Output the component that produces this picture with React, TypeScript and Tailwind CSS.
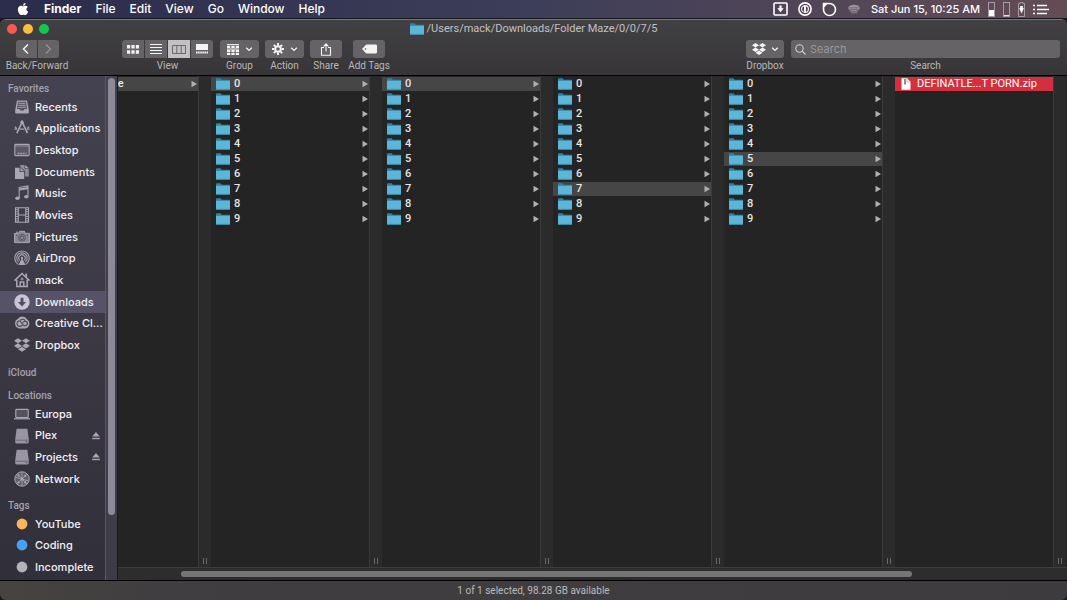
import type { ReactNode } from 'react';
import { FaApple, FaDropbox } from 'react-icons/fa';

function Icon({ children, className = 'size-4', box = '0 0 16 16' }: { children: ReactNode; className?: string; box?: string }) {
  return (
    <svg viewBox={box} className={className + ' shrink-0'} fill="none" stroke="currentColor" strokeWidth="1" aria-hidden="true">
      {children}
    </svg>
  );
}

function FolderIcon() {
  return (
    <svg viewBox="0 0 14 12" className="h-3 w-[14px] shrink-0" aria-hidden="true">
      <path d="M0 .8Q0 .3.5.3H4.6L5.8 1.7H13.5Q14 1.7 14 2.2V5H0Z" fill="#32819f" />
      <path d="M0 2.7H14V11Q14 11.6 13.4 11.6H.6Q0 11.6 0 11Z" fill="#5cb6d9" />
      <path d="M0 10.8H14V11Q14 11.6 13.4 11.6H.6Q0 11.6 0 11Z" fill="#489fbe" />
    </svg>
  );
}

function Chevron() {
  return (
    <Icon className="h-2 w-2" box="0 0 8 8">
      <path d="M1.2 2.7 4 5.4 6.8 2.7" strokeWidth="1.3" />
    </Icon>
  );
}

const sideIcons: Record<string, ReactNode> = {
  Recents: (
    <Icon>
      <path d="M3 1.5H13L14.8 11V13.5Q14.8 14.6 13.7 14.6H2.3Q1.2 14.6 1.2 13.5V11Z" fill="#aaa6b4" stroke="none" />
      <path d="M4 2.8H12L13 10H10.5L9.8 11.5H6.2L5.5 10H3Z" fill="#55515f" stroke="none" />
      <path d="M4.5 4.3H11.5M4.3 6.3H11.7M4.1 8.3H11.9" stroke="#aaa6b4" strokeWidth=".9" />
    </Icon>
  ),
  Applications: (
    <Icon>
      <path d="M8 1.6 13.4 13.2M8.2 2 2.8 13.2" strokeWidth="1.6" />
      <path d="M.5 9.2H3M5.6 9.2H10.2M13 9.2H15.5M1 6.6 2.6 8.4M15 6.6 13.4 8.4M6.5 3.2 8 .8 9.5 3.2" strokeWidth="1.3" />
    </Icon>
  ),
  Desktop: (
    <Icon>
      <rect x=".8" y="2.4" width="14.4" height="11.2" rx=".8" fill="#5b5765" strokeWidth="1.1" />
      <path d="M1 4H15" strokeWidth=".7" />
      <path d="M3.6 11.5H12.6" strokeWidth="1.5" strokeDasharray="1.8 .8" />
    </Icon>
  ),
  Documents: (
    <Icon>
      <path d="M6.2 1H10.5V4.8H14.8V12.5H11V7L6.2 3Z" fill="#8d8998" stroke="none" />
      <path d="M11.2 1 14.8 4.2H11.2Z" fill="currentColor" stroke="none" />
      <path d="M1 3.7H5.6V8H10.2V15H1Z" fill="currentColor" stroke="none" />
      <path d="M6.4 3.7 10.2 7.3H6.4Z" fill="currentColor" stroke="none" />
    </Icon>
  ),
  Music: (
    <Icon>
      <path d="M5.2 13V2.4L14 1V11.5" strokeWidth="1.1" />
      <path d="M5.2 3.4 14 2V4.2L5.2 5.6Z" fill="currentColor" stroke="none" />
      <ellipse cx="3.5" cy="13.3" rx="2.2" ry="1.8" fill="currentColor" stroke="none" />
      <ellipse cx="12.3" cy="11.8" rx="2.2" ry="1.8" fill="currentColor" stroke="none" />
    </Icon>
  ),
  Movies: (
    <Icon>
      <path d="M1.5 .8H14.5V15.2H1.5Z" strokeWidth="1.1" />
      <path d="M4.3 1V15M11.7 1V15M4.3 8H11.7" strokeWidth="1.1" />
      <path d="M3 2V15M13 2V15" strokeDasharray="1 1.3" strokeWidth="1.8" />
    </Icon>
  ),
  Pictures: (
    <Icon>
      <path d="M.6 4.4H4.5L5.6 2.3H10.4L11.5 4.4H15.4V13.6H.6Z" fill="#8a8694" strokeWidth="1" />
      <circle cx="8" cy="8.8" r="3.4" stroke="#5b5765" />
      <circle cx="8" cy="8.8" r="1.8" stroke="#5b5765" />
      <path d="M2 6.3H3.6M12.4 6.3H14" stroke="#5b5765" />
      <path d="M2 3.2H4" />
    </Icon>
  ),
  AirDrop: (
    <Icon>
      <path d="M4 14.2A7.2 7.2 0 1 1 12 14.2" strokeWidth="1.1" />
      <path d="M4.6 12A5.2 5.2 0 1 1 11.4 12" strokeWidth="1.1" />
      <path d="M5.7 10.3A3.2 3.2 0 1 1 10.3 10.3" strokeWidth="1.1" />
      <path d="M8 8 4.4 15H11.6Z" fill="currentColor" stroke="none" />
      <circle cx="8" cy="8" r="1.2" fill="currentColor" stroke="none" />
    </Icon>
  ),
  mack: (
    <Icon>
      <path d="M.5 8.7 8 1.5 15.5 8.7" strokeWidth="1.6" />
      <path d="M12.2 1.6V5.2" strokeWidth="1.8" />
      <path d="M2.8 7.8V14.5H13.2V7.8" strokeWidth="1.5" />
      <path d="M6.2 14.5V10H9.8V14.5" strokeWidth="1.5" />
      <circle cx="8" cy="7" r="1" />
    </Icon>
  ),
  Downloads: (
    <Icon>
      <circle cx="8" cy="8" r="7.7" fill="#c9c5d5" stroke="none" />
      <path d="M6.6 3.7H9.4V8H12L8 12.4 4 8H6.6Z" fill="#504c61" stroke="none" />
    </Icon>
  ),
  'Creative Cl...': (
    <Icon>
      <path d="M5 13.4A5.2 5.2 0 0 1 3.9 3.7 5.6 5.6 0 0 1 13 4.2 5 5 0 0 1 11.3 13.4Z" fill="currentColor" stroke="none" />
      <path d="M8.4 10.2C7.6 11.2 6.3 11.6 5 11.2A2.8 2.8 0 0 1 5 5.8C7.7 5.8 8 10.8 11 10.8A2.3 2.3 0 0 0 11.2 6.2C9.9 6.2 9.3 7 8.6 7.8M6.3 5.3C8 3.5 10.6 4.1 11.4 6.2" stroke="#4a4654" strokeWidth="1.1" />
    </Icon>
  ),
  Dropbox: <FaDropbox className="size-4 shrink-0" aria-hidden="true" />,
  Europa: (
    <Icon>
      <rect x="1.8" y="3.4" width="12.4" height="8.2" rx=".6" fill="#55515f" strokeWidth="1.1" />
      <path d="M0 12.8H16" strokeWidth="1.2" />
    </Icon>
  ),
  Plex: <DriveIcon />,
  Projects: <DriveIcon />,
  Network: (
    <Icon>
      <circle cx="8" cy="8" r="7.2" fill="#625e6c" />
      <path d="M8 1V15M1.3 6.2 14.7 10M3 12.8 12.8 3.2M4 3.2 12.6 13" strokeWidth=".8" />
      <circle cx="8" cy="8" r="1.5" fill="currentColor" stroke="none" />
      <circle cx="4.6" cy="4.6" r="1.1" fill="currentColor" stroke="none" />
      <circle cx="11.3" cy="4.8" r="1.1" fill="currentColor" stroke="none" />
      <circle cx="11.2" cy="11.4" r="1.1" fill="currentColor" stroke="none" />
      <circle cx="4.5" cy="11.3" r="1.1" fill="currentColor" stroke="none" />
    </Icon>
  ),
  YouTube: <TagDot color="#ffb35c" />,
  Coding: <TagDot color="#46a0f8" />,
  Incomplete: <TagDot color="#b4b2b8" />,
};

function DriveIcon() {
  return (
    <Icon>
      <path d="M2.6 .8H13.4L14.8 11.5V14Q14.8 15.4 13.4 15.4H2.6Q1.2 15.4 1.2 14V11.5Z" fill="#9995a4" stroke="none" />
      <path d="M1.5 12.2H14.5" stroke="#625e6c" strokeWidth=".8" />
      <path d="M11.8 13.8H13.2" stroke="#4a4754" />
    </Icon>
  );
}

function TagDot({ color }: { color: string }) {
  return (
    <Icon>
      <circle cx="8" cy="8" r="5.4" fill={color} stroke="none" />
    </Icon>
  );
}

function SidebarList({ items, selected, ejectable = [], className }: { items: string[]; selected?: string; ejectable?: string[]; className: string }) {
  return (
    <ul className={'grid auto-rows-fr ' + className}>
      {items.map((name) => (
        <li key={name} className={'flex items-center pr-1 ' + (name === selected ? 'bg-[#565368]' : '')}>
          <a href="#" className="flex min-w-0 flex-1 items-center gap-[5px] pl-[14px] text-[#aaa6b4]">
            {sideIcons[name]}
            <span className="whitespace-nowrap font-['Inter','Liberation_Sans',sans-serif] text-[11px] font-medium text-[#f2f0f5]">{name}</span>
          </a>
          {ejectable.includes(name) && (
            <button aria-label={'Eject ' + name} className="mr-[1px] text-[#a9a6b2]">
              <Icon className="size-2" box="0 0 8 8">
                <path d="M4 0 7.8 4.5H.2Z" fill="currentColor" stroke="none" />
                <path d="M.2 6.5H7.8" strokeWidth="1.4" />
              </Icon>
            </button>
          )}
        </li>
      ))}
    </ul>
  );
}

function SideHeading({ children, className = '' }: { children: ReactNode; className?: string }) {
  return <h2 className={'h-4 pl-2 text-[10px] leading-[18px] font-medium text-[#a5a2ae] ' + className}>{children}</h2>;
}

function Column({ items, selected }: { items: string[]; selected?: string }) {
  return (
    <section className="flex shrink-0">
      <ul className="flex w-[159px] flex-col gap-px border-r border-[#3b3b3b] bg-[#242424] pt-px">
        {items.map((name) => (
          <li key={name} className={name === selected ? 'bg-[#464646]' : ''}>
            <button className="flex h-[14px] w-full items-center gap-1 pr-px pl-[5px] text-left text-[11px] font-medium text-[#e6e6e6]">
              <FolderIcon />
              <span className="flex-1">{name}</span>
              <Icon className="h-2 w-[6px]" box="0 0 6 8">
                <path d="M.5 .8 6 4 .5 7.2Z" fill="#b0b0b0" stroke="none" />
              </Icon>
            </button>
          </li>
        ))}
      </ul>
      <Divider />
    </section>
  );
}

function Divider() {
  return (
    <div className="flex w-3 items-end justify-center gap-[2px] bg-[#2b2b2b] pb-[3px]">
      <span className="h-[6px] w-px bg-[#696969]" />
      <span className="h-[6px] w-px bg-[#696969]" />
    </div>
  );
}

function Tool({ label, children, className = '' }: { label: string; children: ReactNode; className?: string }) {
  return (
    <div className={'flex flex-col items-center gap-[2px] ' + className}>
      <div className="flex h-[18px] w-full justify-center gap-px">{children}</div>
      <span className="text-[10px] leading-3 whitespace-nowrap text-[#b9b7b9]">{label}</span>
    </div>
  );
}

const btn = 'flex h-[18px] items-center justify-center bg-[#656365] text-[#f4f4f4]';

const digits = ['0', '1', '2', '3', '4', '5', '6', '7', '8', '9'];

export default function App() {
  return (
    <div className="flex h-screen flex-col overflow-hidden bg-[#17171c] font-['Roboto','Liberation_Sans',sans-serif]">
      <header className="flex h-[19px] shrink-0 items-center justify-between border-b border-[#17171f] bg-linear-to-r from-[#2b2c4b] via-[#3d3e59] to-[#644c54] pr-[18px] pl-4 font-['Inter','Liberation_Sans',sans-serif] text-[12px] font-medium text-white">
        <nav className="flex items-center gap-[14px]">
          <button aria-label="Apple menu" className="flex w-[14px] justify-center">
            <FaApple className="size-[14px]" />
          </button>
          <button className="font-bold">Finder</button>
          {['File', 'Edit', 'View', 'Go', 'Window', 'Help'].map((m) => (
            <button key={m}>{m}</button>
          ))}
        </nav>
        <div className="flex items-center gap-[10px]">
          <Icon className="h-[14px] w-[15px]" box="0 0 15 14">
            <rect x="1" y="1" width="13" height="12" rx="1" strokeWidth="1.6" />
            <path d="M7.5 3.5V7" strokeWidth="2.2" />
            <path d="M4.3 6.3H10.7L7.5 10.2Z" fill="currentColor" stroke="none" />
          </Icon>
          <Icon className="size-[14px]" box="0 0 14 14">
            <circle cx="7" cy="7" r="6.1" strokeWidth="1.6" />
            <circle cx="7" cy="7" r="3.4" strokeWidth="1.1" />
            <path d="M7 4.2V9.8" strokeWidth="1.9" />
          </Icon>
          <Icon className="size-[15px]" box="0 0 15 15">
            <path d="M1.5 1.5H7.5A6 6 0 1 1 1.5 7.5Z" strokeWidth="1.6" />
            <path d="M1.5 6 6 1.5H1.5Z" fill="currentColor" stroke="none" />
          </Icon>
          <Icon className="h-[11px] w-[14px]" box="0 0 14 11">
            <ellipse cx="7" cy="4" rx="5.8" ry="3.3" fill="#9a929c" stroke="none" />
            <path d="M1.8 5.6Q7 9 12.2 5.6L9.5 9.6H4.5Z" fill="#77707a" stroke="none" />
            <path d="M2.5 3.8H11.5M3 5.6H11" stroke="#5c5461" strokeWidth=".7" />
          </Icon>
          <div className="flex items-center gap-2">
            <time className="text-[11px] whitespace-nowrap">Sat Jun 15, 10:25 AM</time>
            <Icon className="h-[15px] w-[7px]" box="0 0 7 15">
              <rect x=".5" y=".5" width="6" height="14" stroke="#a69aa4" />
              <path d="M1 8H6V14H1Z" fill="white" stroke="none" />
            </Icon>
            <Icon className="h-[15px] w-[7px]" box="0 0 7 15">
              <rect x=".5" y=".5" width="6" height="14" stroke="#a69aa4" />
              <path d="M1 13.5H6" stroke="#e6dfe3" />
            </Icon>
            <Icon className="h-[15px] w-[7px]" box="0 0 7 15">
              <path d="M2 1.5V.5H5V1.5H6.5V14.5H.5V1.5Z" stroke="#a69aa4" />
              <path d="M2.2 4H4.8V6H5.8L3.5 11.5 1.2 6H2.2Z" fill="white" stroke="none" />
            </Icon>
            <Icon className="h-[11px] w-4" box="0 0 16 11">
              <path d="M0 1.5H2M0 5.5H2M0 9.5H2M4 1.5H14M4 5.5H16M4 9.5H14" strokeWidth="1.6" />
            </Icon>
          </div>
        </div>
      </header>

      <main className="flex min-h-0 flex-1 flex-col overflow-hidden rounded-md border-t border-[#777579] bg-[#242424]">
        <div className="shrink-0 border-b border-black bg-linear-to-b from-[#414042] to-[#373537]">
          <div className="grid h-[18px] grid-cols-[1fr_auto_1fr] items-center">
            <div className="flex gap-[6px] pl-[7px]">
              <button aria-label="Close" className="size-[10px] rounded-full bg-[#fc5753]" />
              <button aria-label="Minimize" className="size-[10px] rounded-full bg-[#fdbc40]" />
              <button aria-label="Zoom" className="size-[10px] rounded-full bg-[#12c94e]" />
            </div>
            <h1 className="flex items-center gap-[3px] text-[11px] text-[#c3c1c3]">
              <FolderIcon />
              /Users/mack/Downloads/Folder Maze/0/0/7/5
            </h1>
          </div>
          <div className="flex h-[37px] items-start px-[7px] pt-[2px]">
            <Tool label="Back/Forward" className="w-[60px]">
              <button aria-label="Back" className={btn + ' w-[21px] rounded-l-[3px]'}>
                <Icon className="size-3" box="0 0 12 12"><path d="M8 1.5 3.5 6 8 10.5" strokeWidth="1.5" /></Icon>
              </button>
              <button aria-label="Forward" disabled className={btn + ' w-[21px] rounded-r-[3px]'}>
                <Icon className="size-3 text-[#979597]" box="0 0 12 12"><path d="M4 1.5 8.5 6 4 10.5" strokeWidth="1.2" /></Icon>
              </button>
            </Tool>
            <Tool label="View" className="ml-[55px] w-[91px]">
              <button aria-label="Icon view" className={btn + ' flex-1 rounded-l-[3px]'}>
                <Icon className="h-[9px] w-3" box="0 0 12 9"><path d="M0 0H3.2V3.6H0ZM4.4 0H7.6V3.6H4.4ZM8.8 0H12V3.6H8.8ZM0 5.2H3.2V8.8H0ZM4.4 5.2H7.6V8.8H4.4ZM8.8 5.2H12V8.8H8.8Z" fill="currentColor" stroke="none" /></Icon>
              </button>
              <button aria-label="List view" className={btn + ' flex-1'}>
                <Icon className="h-[10px] w-3" box="0 0 12 10"><path d="M0 .5H12M0 3.5H12M0 6.5H12M0 9.5H12" strokeWidth="1.2" /></Icon>
              </button>
              <button aria-label="Column view" aria-pressed="true" className="flex h-[18px] flex-1 items-center justify-center bg-[#c3c1c3] text-[#6b696b]">
                <Icon className="h-[9px] w-[14px]" box="0 0 14 9"><path d="M.5 .5H13.5V8.5H.5ZM4.8 .5V8.5M9.2 .5V8.5" /></Icon>
              </button>
              <button aria-label="Gallery view" className={btn + ' flex-1 rounded-r-[3px]'}>
                <Icon className="h-[10px] w-3" box="0 0 12 10"><path d="M0 0H12V6H0Z" fill="currentColor" stroke="none" /><path d="M0 8.5H12" strokeWidth="2" strokeDasharray="1.6 .5" /></Icon>
              </button>
            </Tool>
            <Tool label="Group" className="ml-[7px] w-[39px]">
              <button aria-label="Group" className={btn + ' w-full gap-[6px] rounded-[3px]'}>
                <Icon className="h-[11px] w-3" box="0 0 12 11"><path d="M0 .6H12M0 5H12" strokeWidth="1" /><path d="M0 2.8H12M0 6.8H12M0 9.8H12" strokeWidth="2.2" strokeDasharray="3.3 1.05" /></Icon>
                <Chevron />
              </button>
            </Tool>
            <Tool label="Action" className="ml-[6px] w-[39px]">
              <button aria-label="Action" className={btn + ' w-full gap-[6px] rounded-[3px]'}>
                <Icon className="size-3" box="0 0 12 12"><circle cx="6" cy="6" r="2.8" strokeWidth="2" /><path d="M6 0V2.4M6 9.6V12M0 6H2.4M9.6 6H12M1.8 1.8 3.4 3.4M8.6 8.6 10.2 10.2M1.8 10.2 3.4 8.6M8.6 3.4 10.2 1.8" strokeWidth="1.9" /></Icon>
                <Chevron />
              </button>
            </Tool>
            <Tool label="Share" className="ml-[6px] w-8">
              <button aria-label="Share" className={btn + ' w-full rounded-[3px]'}>
                <Icon className="h-[13px] w-3" box="0 0 12 13"><path d="M4 4.5H1.5V12.2H10.5V4.5H8M6 8.5V1M3.6 3.3 6 .9 8.4 3.3" strokeWidth="1.1" /></Icon>
              </button>
            </Tool>
            <Tool label="Add Tags" className="ml-[11px] w-8">
              <button aria-label="Add Tags" className={btn + ' w-full rounded-[3px]'}>
                <Icon className="h-[10px] w-[15px]" box="0 0 15 10"><path d="M0 5 4 .8Q4.5 .4 5 .4H13.5Q15 .4 15 1.8V8.2Q15 9.6 13.5 9.6H5Q4.5 9.6 4 9.2Z" fill="currentColor" stroke="none" /><circle cx="3.5" cy="5" r=".8" fill="#555" stroke="none" /></Icon>
              </button>
            </Tool>
            <Tool label="Dropbox" className="ml-auto w-[38px]">
              <button aria-label="Dropbox" className={btn + ' w-full gap-[5px] rounded-[3px]'}>
                <FaDropbox className="size-[14px]" />
                <Chevron />
              </button>
            </Tool>
            <div className="ml-[7px] flex w-[269px] flex-col items-center gap-[2px]">
              <div className="flex h-[18px] w-full items-center gap-1 rounded-[3px] bg-[#656365] pl-1 text-[#d2d0d2]">
                <Icon className="size-[11px]" box="0 0 11 11"><circle cx="4.5" cy="4.5" r="3.7" strokeWidth="1.1" /><path d="M7.2 7.2 10.5 10.5" strokeWidth="1.2" /></Icon>
                <input id="search" placeholder="Search" className="w-full bg-transparent font-['Inter','Liberation_Sans',sans-serif] text-[11px] outline-none placeholder:text-[#999799]" />
              </div>
              <label htmlFor="search" className="text-[10px] leading-3 text-[#b9b7b9]">Search</label>
            </div>
          </div>
        </div>

        <div className="flex min-h-0 flex-1">
          <aside className="flex w-[118px] shrink-0 overflow-hidden border-r border-[#19191c] bg-linear-to-b from-[#444250] via-[#3c3945] to-[#302f3a]">
            <div className="w-[105px] shrink-0 pt-1">
              <SideHeading>Favorites</SideHeading>
              <SidebarList
                className="h-[260px]"
                selected="Downloads"
                items={['Recents', 'Applications', 'Desktop', 'Documents', 'Music', 'Movies', 'Pictures', 'AirDrop', 'mack', 'Downloads', 'Creative Cl...', 'Dropbox']}
              />
              <SideHeading className="mt-2">iCloud</SideHeading>
              <SideHeading className="mt-[7px]">Locations</SideHeading>
              <SidebarList className="h-[87px]" ejectable={['Plex', 'Projects']} items={['Europa', 'Plex', 'Projects', 'Network']} />
              <SideHeading className="mt-[7px]">Tags</SideHeading>
              <SidebarList className="h-[65px]" items={['YouTube', 'Coding', 'Incomplete']} />
            </div>
            <div className="flex flex-1 flex-col items-center border-l border-[#5b5866] bg-[#47444f]/60 pt-[2px]">
              <div className="h-[87%] w-[7px] rounded-full bg-[#8d8999]" />
            </div>
          </aside>

          <div className="flex min-w-0 flex-1 flex-col">
            <div className="flex min-h-0 flex-1 justify-end overflow-hidden pr-px">
              <Column items={['Folder Maze']} selected="Folder Maze" />
              <Column items={digits} selected="0" />
              <Column items={digits} selected="0" />
              <Column items={digits} selected="7" />
              <Column items={digits} selected="5" />
              <section className="flex shrink-0">
                <div className="w-[159px] border-r border-[#3b3b3b] bg-[#242424] pt-px">
                  <button className="flex h-[14px] w-full items-center gap-[6px] bg-[#d32f3f] pl-[6px] text-[11px] whitespace-nowrap text-white">
                    <Icon className="h-3 w-[10px]" box="0 0 10 12">
                      <path d="M.5 .3H6L9.5 3.8V11.7H.5Z" fill="white" stroke="none" />
                      <path d="M6 .3V4H9.5" stroke="#a9a9a9" strokeWidth=".7" />
                      <path d="M4 1V6.5" stroke="#444" strokeWidth="1.2" />
                    </Icon>
                    DEFINATLE...T PORN.zip
                  </button>
                </div>
                <Divider />
              </section>
            </div>
            <div className="flex h-[13px] shrink-0 items-center border-t border-[#3d3d3d] bg-[#2d2d2d]">
              <div className="ml-[63px] h-[6px] w-[77%] rounded-full bg-[#757575]" />
            </div>
          </div>
        </div>

        <footer className="flex h-5 shrink-0 items-center justify-center border-t border-black bg-linear-to-r from-[#464340] via-[#403e40] via-15% to-[#3d3b3d] text-[10px] text-[#bcbabc]">
          1 of 1 selected, 98.28 GB available
        </footer>
      </main>
    </div>
  );
}
